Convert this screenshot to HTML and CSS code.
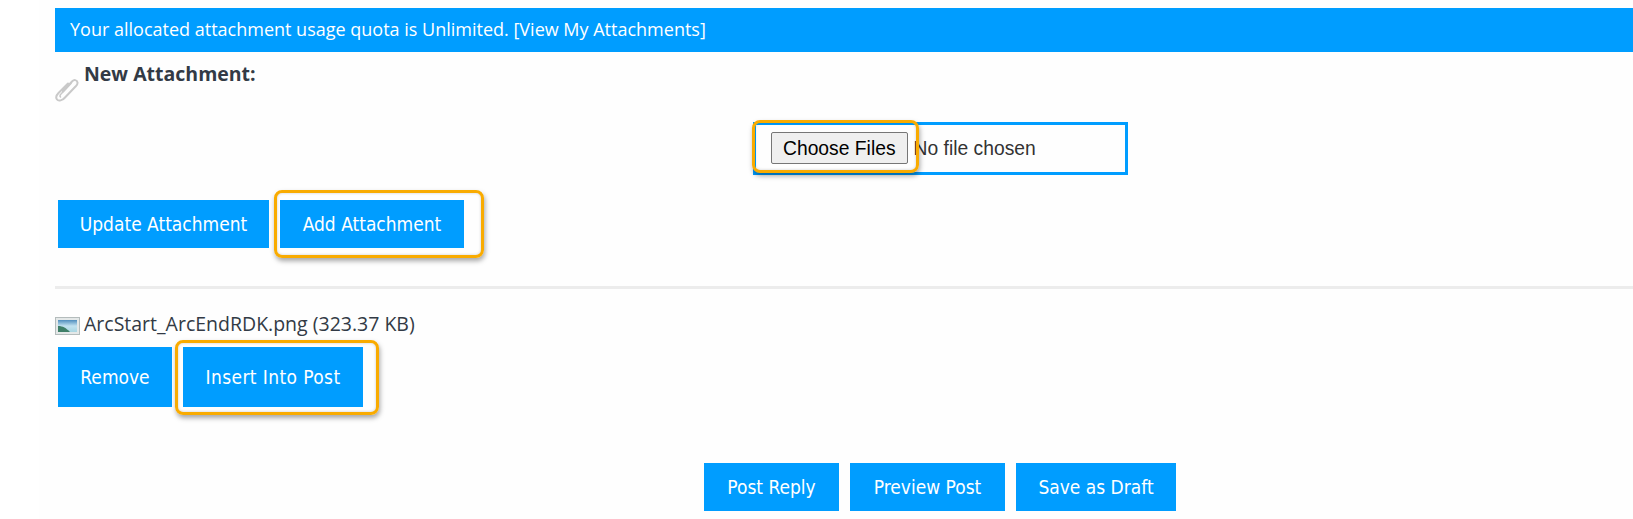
FILE: index.html
```html
<!DOCTYPE html>
<html lang="en">
<head>
<meta charset="utf-8">
<title>Attachments</title>
<link rel="stylesheet" href="styles.css">
</head>
<body>
<main class="page">
  <div class="quota">Your allocated attachment usage quota is Unlimited. [View My Attachments]</div>
  <div class="new-row">
    <svg class="clip" width="24" height="26" viewBox="0 0 24 26" fill="none" stroke="#c9c9c9" stroke-width="2" stroke-linecap="round" stroke-linejoin="round">
      <path d="M8 14.500 L17 4.500 C19 2.500 22 2.500 22.500 5.500 C22.800 7.500 21.500 8.500 20.500 9.500 L10 20.500 C7.500 23.500 3.500 24.500 2 22.500 C0.500 20.500 1.500 18 3.500 16 L13 6.500"/>
      <path d="M5.500 20 C4.500 19 5 18 6 17 L16 6.500" stroke-width="1.500"/>
    </svg>
    <strong class="new-label">New Attachment:</strong>
  </div>
  <div class="file-row">
    <div class="file-box">
      <input class="file-input" type="file" multiple>
      <span class="mark mark-file"></span>
    </div>
  </div>
  <div class="btn-row attach-row">
    <button class="btn btn-update">Update Attachment</button>
    <button class="btn btn-add">Add Attachment<span class="mark mark-add"></span></button>
  </div>
  <hr class="rule">
  <div class="file-line">
    <svg class="thumb" width="25" height="18" viewBox="0 0 25 18">
      <defs>
        <linearGradient id="sky" x1="0" y1="0" x2="0" y2="1">
          <stop offset="0" stop-color="#4f8dbd"/>
          <stop offset="0.500" stop-color="#c2e2f0"/>
          <stop offset="1" stop-color="#a8d6e2"/>
        </linearGradient>
      </defs>
      <rect x="0.500" y="0.500" width="24" height="17" fill="#e4e8e8" stroke="#b4bcbc"/>
      <rect x="3" y="3" width="19" height="12" fill="url(#sky)"/>
      <path d="M3 9 C8 9 11 11 15 15 L3 15 Z" fill="#3f7f68"/>
    </svg>
    <span>ArcStart_ArcEndRDK.png (323.37 KB)</span>
  </div>
  <div class="btn-row item-row">
    <button class="btn btn-remove">Remove</button>
    <button class="btn btn-insert">Insert Into Post<span class="mark mark-insert"></span></button>
  </div>
  <div class="btn-row submit-row">
    <button class="btn btn-reply">Post Reply</button>
    <button class="btn btn-preview">Preview Post</button>
    <button class="btn btn-draft">Save as Draft</button>
  </div>
</main>
</body>
</html>
```

FILE: styles.css
```css
* { box-sizing: border-box; }
html, body { margin: 0; padding: 0; height: 519px; overflow: hidden; background: #fff; }
body { font-family: "Open Sans", "Noto Sans", sans-serif; color: #323a45; }
.page { margin-left: 39px; height: 519px; padding: 8px 0 0 16px; background: #fefefe; }
.quota {
  height: 44px;
  padding-left: 15px;
  background: #009dff;
  color: #fff;
  font-size: 18px;
  line-height: 42px;
}
.new-row { display: flex; align-items: flex-start; height: 70px; padding-top: 9px; }
.clip { margin-top: 16px; margin-right: 5px; flex: none; }
.new-label { font-size: 19.500px; line-height: 26px; font-weight: 700; }
.file-row { padding-left: 698px; }
.file-box {
  position: relative;
  width: 375px;
  height: 53px;
  border: 3px solid #009dff;
  padding: 7px 0 0 15px;
}
.file-input { font: 19.300px "Liberation Sans", Arial, sans-serif; color: #333; width: 340px; display: block; }
.file-input::file-selector-button {
  font: 19.300px "Liberation Sans", Arial, sans-serif;
  height: 32px;
  padding: 2px 11px 0;
  margin: 0 6px 0 0;
  background: #efefef;
  border: 1px solid #767676;
  border-radius: 2px;
  color: #000;
}
.btn-row { display: flex; gap: 11px; padding-left: 3px; }
.attach-row { margin-top: 25px; }
.btn {
  position: relative;
  height: 48px;
  border: 0;
  padding: 0;
  background: #009dff;
  color: #fff;
  font: 19px "DejaVu Sans Condensed", "DejaVu Sans", sans-serif;
  text-align: center;
}
.btn-update { width: 211px; }
.btn-add { width: 184px; }
.btn-remove { width: 114px; height: 60px; }
.btn-insert { width: 180px; height: 60px; letter-spacing: 0.400px; }
.btn-reply { width: 135px; }
.btn-preview { width: 155px; }
.btn-draft { width: 160px; }
.mark {
  position: absolute;
  border: 3px solid #f9ab00;
  border-radius: 8px;
  box-shadow: 1px 3px 5px rgba(0, 0, 0, 0.35), inset 0 0 3px rgba(0, 0, 0, 0.2);
  pointer-events: none;
}
.mark-file { left: -4px; top: -5px; width: 167px; height: 53px; }
.mark-add { left: -6px; top: -10px; right: -20px; bottom: -10px; }
.mark-insert { left: -8px; top: -7px; right: -16px; bottom: -8px; }
.rule { height: 3px; margin: 38px 0 0; border: 0; background: #ececec; }
.file-line { display: flex; align-items: center; gap: 4px; height: 24px; margin-top: 23px; font-size: 19.500px; line-height: 24px; }
.thumb { flex: none; margin-top: 3px; }
.item-row { margin-top: 11px; }
.submit-row { margin-top: 56px; padding-left: 649px; }
```
